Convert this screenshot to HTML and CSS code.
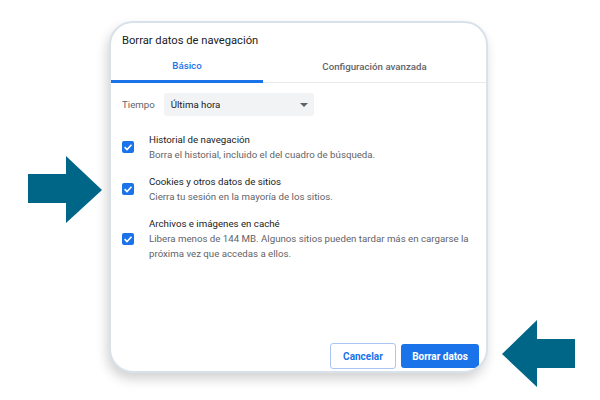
FILE: index.html
```html
<!DOCTYPE html>
<html lang="es">
<head>
<meta charset="utf-8">
<link rel="stylesheet" href="styles.css">
</head>
<body>
<div class="stage">
  <div class="dialog">
    <div class="title">Borrar datos de navegación</div>
    <div class="tabs">
      <div class="tab active">Básico</div>
      <div class="tab">Configuración avanzada</div>
    </div>
    <div class="body">
      <div class="time-row">
        <span class="time-label">Tiempo</span>
        <div class="select">
          <span>Última hora</span>
          <span class="caret"></span>
        </div>
      </div>
      <div class="item">
        <span class="check"><svg viewBox="0 0 12 12" width="12" height="12"><path d="M2.6 6.2 L5 8.5 L9.5 3.8" fill="none" stroke="#fff" stroke-width="1.6"/></svg></span>
        <div class="texts">
          <div class="primary">Historial de navegación</div>
          <div class="secondary">Borra el historial, incluido el del cuadro de búsqueda.</div>
        </div>
      </div>
      <div class="item">
        <span class="check"><svg viewBox="0 0 12 12" width="12" height="12"><path d="M2.6 6.2 L5 8.5 L9.5 3.8" fill="none" stroke="#fff" stroke-width="1.6"/></svg></span>
        <div class="texts">
          <div class="primary">Cookies y otros datos de sitios</div>
          <div class="secondary">Cierra tu sesión en la mayoría de los sitios.</div>
        </div>
      </div>
      <div class="item">
        <span class="check"><svg viewBox="0 0 12 12" width="12" height="12"><path d="M2.6 6.2 L5 8.5 L9.5 3.8" fill="none" stroke="#fff" stroke-width="1.6"/></svg></span>
        <div class="texts">
          <div class="primary">Archivos e imágenes en caché</div>
          <div class="secondary">Libera menos de 144 MB. Algunos sitios pueden tardar más en cargarse la próxima vez que accedas a ellos.</div>
        </div>
      </div>
    </div>
    <div class="actions">
      <button class="btn cancel">Cancelar</button>
      <button class="btn primary-btn">Borrar datos</button>
    </div>
  </div>
  <svg class="arrow arrow-right" width="76" height="68" viewBox="0 0 76 68"><polygon points="0,18 38,18 38,0 74,34 38,67 38,47 0,47" fill="#006688"/></svg>
  <svg class="arrow arrow-left" width="75" height="68" viewBox="0 0 75 68"><polygon points="0,34 35,0 35,19 73,19 73,48 35,48 35,67" fill="#006688"/></svg>
</div>
</body>
</html>
```
FILE: styles.css
```css
html, body {
  margin: 0;
  padding: 0;
  background: #ffffff;
}
body {
  font-family: Roboto, "Liberation Sans", Arial, sans-serif;
  width: 600px;
  height: 400px;
  overflow: hidden;
}
.stage {
  position: relative;
  width: 600px;
  height: 400px;
  padding: 21px 0 0 109px;
  box-sizing: border-box;
}
.dialog {
  width: 379px;
  height: 352px;
  box-sizing: border-box;
  border: 2px solid #d9e1ea;
  border-radius: 24px;
  background: #fff;
  box-shadow: -2px 6px 12px rgba(0, 0, 0, 0.18);
  display: flex;
  flex-direction: column;
  overflow: hidden;
}
.title {
  font-size: 11.2px;
  color: #202124;
  padding: 10px 0 0 11px;
  height: 19px;
  line-height: 16px;
}
.tabs {
  display: grid;
  grid-template-columns: 152px 1fr;
  border-bottom: 1px solid #e8eaed;
  height: 31px;
  box-sizing: border-box;
}
.tab {
  font-size: 9.7px;
  font-weight: 500;
  color: #5f6368;
  text-align: center;
  line-height: 29px;
  border-bottom: 2px solid transparent;
  margin-bottom: -1px;
}
.tab.active {
  color: #1a73e8;
  border-bottom: 3px solid #1a73e8;
  line-height: 28px;
}
.body {
  padding: 10px 0 0 11px;
  flex: 1;
}
.time-row {
  display: flex;
  align-items: center;
  gap: 9px;
  margin-bottom: 16px;
}
.time-label {
  font-size: 9.7px;
  color: #5f6368;
}
.select {
  width: 150px;
  height: 23px;
  background: #f1f3f4;
  border-radius: 3px;
  display: flex;
  align-items: center;
  justify-content: space-between;
  padding: 0 6px 0 7px;
  box-sizing: border-box;
  font-size: 9.7px;
  color: #202124;
}
.caret {
  width: 0;
  height: 0;
  border-left: 4px solid transparent;
  border-right: 4px solid transparent;
  border-top: 4px solid #5f6368;
}
.item {
  display: flex;
  align-items: center;
  gap: 15px;
  margin-bottom: 12px;
}
.check {
  width: 12px;
  height: 12px;
  background: #1a73e8;
  border-radius: 2px;
  flex: none;
  display: flex;
}
.texts {
  font-size: 9.7px;
  line-height: 15px;
  width: 330px;
}
.primary {
  color: #202124;
}
.secondary {
  color: #5f6368;
}
.actions {
  display: flex;
  justify-content: flex-end;
  align-items: center;
  gap: 5px;
  padding: 0 7px 2px 0;
}
.btn {
  font-family: Roboto, "Liberation Sans", Arial, sans-serif;
  font-size: 10px;
  font-weight: 700;
  border-radius: 3px;
  box-sizing: border-box;
  cursor: pointer;
}
.cancel {
  width: 66px;
  height: 26px;
  background: #fff;
  color: #1a73e8;
  border: 1px solid #a9c6f5;
}
.primary-btn {
  width: 78px;
  height: 24px;
  background: #1a73e8;
  color: #fff;
  border: none;
}
.arrow {
  position: absolute;
}
.arrow-right {
  left: 28px;
  top: 156px;
}
.arrow-left {
  left: 502px;
  top: 320px;
}
```
